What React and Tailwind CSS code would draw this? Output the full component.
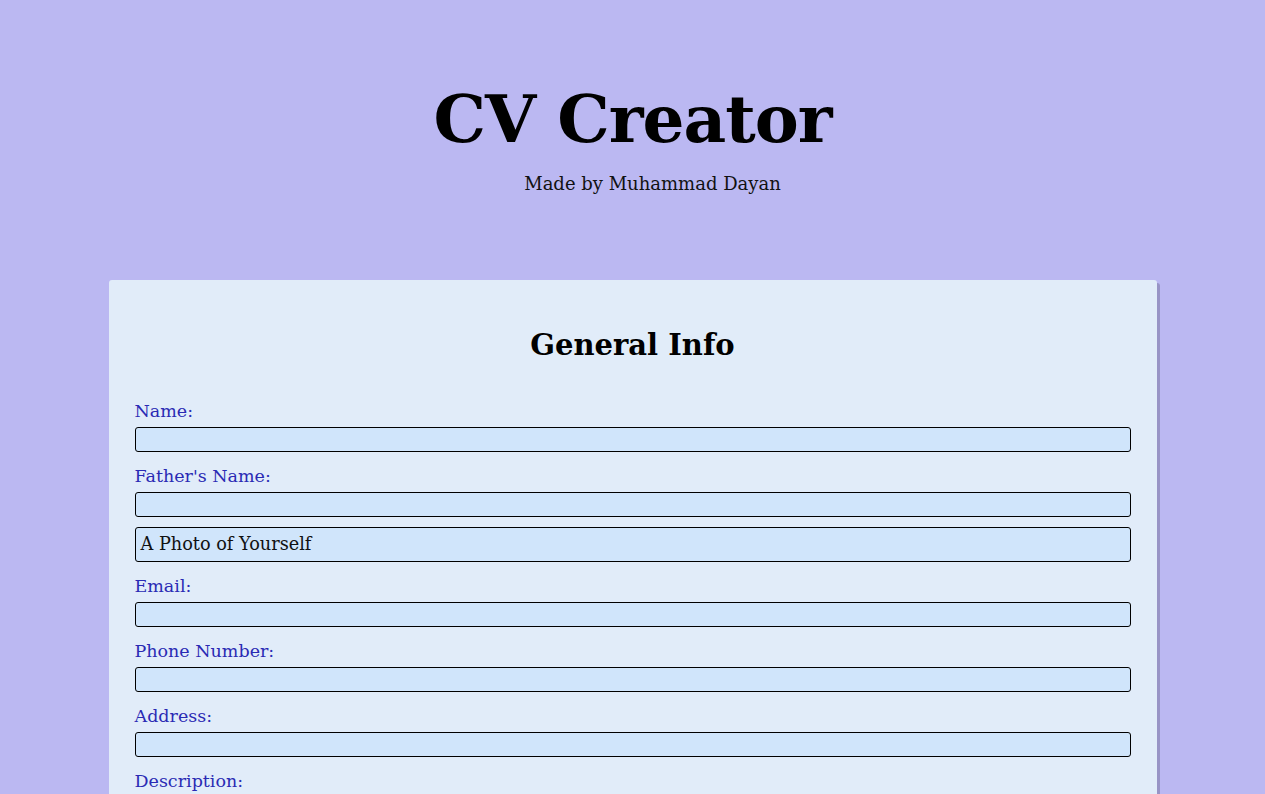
const fields = [
  { label: 'Name:', type: 'text' },
  { label: "Father's Name:", type: 'text' },
  { label: null, photo: 'A Photo of Yourself' },
  { label: 'Email:', type: 'email' },
  { label: 'Phone Number:', type: 'tel' },
  { label: 'Address:', type: 'text' },
  { label: 'Description:', type: 'textarea' },
];

const App = () => {
  return (
    <div className="min-h-screen bg-[#bbb8f2] font-['DejaVu_Serif',serif] text-black">
      {/* Header */}
      <header className="flex flex-col items-center pt-[71px]">
        <h1 className="text-[66px] font-bold leading-[96px] tracking-[-1px]">CV Creator</h1>
        <p className="ml-[40px] mt-[5px] text-[18px] leading-[24px] text-[#111]">Made by Muhammad Dayan</p>
      </header>

      {/* Form card */}
      <main className="mx-auto mt-[84px] w-[1048px] rounded-[3px] bg-[#e1ecf9] px-[26px] pt-[43px] pb-8 shadow-[3px_3px_0_#9894c6]">
        <h2 className="mb-[32px] text-center text-[29px] font-bold leading-[44px]">General Info</h2>
        <form className="flex flex-col">
          {fields.map((f, idx) =>
            f.photo ? (
              <label
                key={idx}
                className="mb-[12px] mt-[-2px] flex h-[35px] items-center rounded-[3px] border border-black bg-[#d0e5fb] px-[5px] text-[17.7px] text-[#111]"
              >
                {f.photo}
                <input type="file" className="hidden" />
              </label>
            ) : (
              <div key={idx} className="flex flex-col">
                <label className="text-[17.5px] leading-[24px] text-[#2a2ab4]">{f.label}</label>
                {f.type === 'textarea' ? (
                  <textarea className="mt-[4px] h-[60px] rounded-[3px] border border-black bg-[#d0e5fb]" />
                ) : (
                  <input
                    type={f.type}
                    className="mb-[12px] mt-[4px] h-[25px] rounded-[3px] border border-black bg-[#d0e5fb]"
                  />
                )}
              </div>
            )
          )}
        </form>
      </main>
    </div>
  );
};

export default App;
